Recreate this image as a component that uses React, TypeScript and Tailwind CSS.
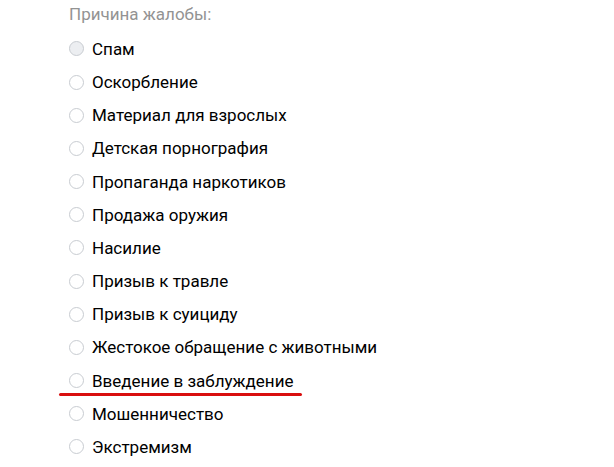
const reasons = [
  'Спам',
  'Оскорбление',
  'Материал для взрослых',
  'Детская порнография',
  'Пропаганда наркотиков',
  'Продажа оружия',
  'Насилие',
  'Призыв к травле',
  'Призыв к суициду',
  'Жестокое обращение с животными',
  'Введение в заблуждение',
  'Мошенничество',
  'Экстремизм',
];

export default function App() {
  return (
    <div className="h-[467px] w-[614px] overflow-hidden bg-white pl-[69px] font-['Roboto',sans-serif] text-[17px]">
      <div className="flex h-[32.4px] items-start pt-[3px] leading-[22px] text-[17px] text-[#939393]">Причина жалобы:</div>
      <ul>
        {reasons.map((r, i) => (
          <li key={r} className="flex h-[33.17px] flex-col justify-center">
            <label className="flex items-center gap-[8px] leading-[22px] text-black">
              <span
                className={
                  i === 0
                    ? 'h-[15px] w-[15px] shrink-0 rounded-full border border-[#c8ccd1] bg-[#eceef1]'
                    : 'h-[15px] w-[15px] shrink-0 rounded-full border border-[#c8ccd1] bg-white'
                }
              />
              {r}
            </label>
            {r === 'Введение в заблуждение' && (
              <div className="relative">
                <div className="absolute left-[-10px] top-[1px] h-[3px] w-[243px] rounded-full bg-[#d90f0f]" />
              </div>
            )}
          </li>
        ))}
      </ul>
    </div>
  );
}
